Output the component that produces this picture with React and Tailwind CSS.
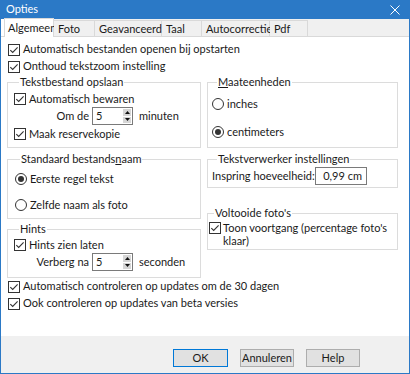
import React from 'react';

function Check({ checked = true }) {
  return (
    <svg width="12" height="12" viewBox="0 0 12 12" className="shrink-0">
      <rect x="0.5" y="0.5" width="11" height="11" fill="#fff" stroke="#333" />
      {checked && <path d="M2.3 6.1 L4.7 8.5 L9.6 3.4" fill="none" stroke="#333" strokeWidth="1.1" />}
    </svg>
  );
}

function Radio({ checked }) {
  return (
    <svg width="12" height="12" viewBox="0 0 12 12" className="shrink-0">
      <circle cx="6" cy="6" r="5.5" fill="#fff" stroke="#333" />
      {checked && <circle cx="6" cy="6" r="3" fill="#333" />}
    </svg>
  );
}

function Spin({ value }) {
  return (
    <div className="flex h-[18px] w-[41px] border border-[#7a7a7a] bg-white">
      <div className="flex-1 pl-[3px] leading-[16px]">{value}</div>
      <div className="flex w-[9px] flex-col gap-[1px] py-[1px] pr-[1px]">
        <div className="flex flex-1 items-center justify-center bg-[#d6d6d6]">
          <svg width="5" height="3" viewBox="0 0 5 3"><path d="M0 3 L2.5 0 L5 3Z" fill="#111" /></svg>
        </div>
        <div className="flex flex-1 items-center justify-center bg-[#d6d6d6]">
          <svg width="5" height="3" viewBox="0 0 5 3"><path d="M0 0 L2.5 3 L5 0Z" fill="#111" /></svg>
        </div>
      </div>
    </div>
  );
}

function Row({ children, className = '' }) {
  return <div className={`flex h-[16px] items-center gap-[3px] whitespace-nowrap ${className}`}>{children}</div>;
}

function Group({ title, className = '', children }) {
  return (
    <fieldset className={`min-w-0 border border-[#dcdcdc] ${className}`}>
      <legend className="ml-[5px] whitespace-nowrap px-[1px] leading-[14px]">{title}</legend>
      {children}
    </fieldset>
  );
}

const tabs = [
  { label: 'Algemeen', w: 'w-[50px]' },
  { label: 'Foto', w: 'w-[41px]' },
  { label: 'Geavanceerd', w: 'w-[67px]' },
  { label: 'Taal', w: 'w-[40px]' },
  { label: 'Autocorrectie', w: 'w-[68px]' },
  { label: 'Pdf', w: 'w-[38px]' },
];

export default function App() {
  return (
    <div
      className="flex h-[374px] w-[410px] flex-col border-x border-b border-[#2b79c6] bg-white text-[11px] text-[#1a1a1a]"
      style={{ fontFamily: 'Lato, "Noto Sans", sans-serif' }}
    >
      {/* title bar */}
      <div className="flex h-[19px] shrink-0 items-center justify-between bg-[#2b79c6] pl-[5px] pr-[9px] text-white">
        <span>Opties</span>
        <svg width="10" height="10" viewBox="0 0 10 10">
          <path d="M0.5 0.5 L9.5 9.5 M9.5 0.5 L0.5 9.5" stroke="#fff" strokeWidth="1" />
        </svg>
      </div>

      {/* tabs */}
      <div className="flex h-[18px] shrink-0 items-end border-b border-[#d9d9d9] bg-[#f0f0f0]">
        <div className="h-full w-[3px] bg-white" />
        {tabs.map((t, i) =>
          i === 0 ? (
            <div key={t.label} className={`${t.w} -mb-[1px] h-[19px] whitespace-nowrap border-x border-t border-[#d9d9d9] bg-white pl-[3px] leading-[17px]`}>
              {t.label}
            </div>
          ) : (
            <div key={t.label} className={`${t.w} h-[16px] whitespace-nowrap border-r border-t border-[#d9d9d9] bg-[#f0f0f0] pl-[4px] leading-[15px]`}>
              {t.label}
            </div>
          )
        )}
      </div>

      {/* panel */}
      <div className="flex-1 px-[6px] pt-[4px]">
        <Row className="h-[17px] pl-[1px]"><Check /><span>Automatisch bestanden openen bij opstarten</span></Row>
        <Row className="h-[17px] pl-[1px]"><Check /><span>Onthoud tekstzoom instelling</span></Row>

        <div className="grid grid-cols-[194px_191px] gap-x-[6px]">
          <div className="flex flex-col">
            <Group title="Tekstbestand opslaan" className="h-[73px] px-[6px]">
              <Row className="mt-[2px]"><Check /><span>Automatisch bewaren</span></Row>
              <div className="flex h-[18px] items-center whitespace-nowrap">
                <span className="w-[78px] pr-[3px] text-right">Om de</span>
                <Spin value="5" />
                <span className="ml-[6px]">minuten</span>
              </div>
              <Row className="mt-[1px]"><Check /><span>Maak reservekopie</span></Row>
            </Group>

            <Group
              title={<span>Standaard bestands<u>n</u>aam</span>}
              className="mt-[4px] h-[67px] px-[7px]"
            >
              <Row className="mt-[5px]"><Radio checked /><span>Eerste regel tekst</span></Row>
              <Row className="mt-[10px]"><Radio /><span>Zelfde naam als foto</span></Row>
            </Group>

            <Group title="Hints" className="mt-[3px] h-[56px] px-[6px]">
              <Row className="mt-[1px]"><Check /><span>Hints zien laten</span></Row>
              <div className="flex h-[18px] items-center whitespace-nowrap">
                <span className="w-[78px] pr-[3px] text-right">Verberg na</span>
                <Spin value="5" />
                <span className="ml-[6px]">seconden</span>
              </div>
            </Group>
          </div>

          <div className="flex flex-col">
            <Group title={<span><u>M</u>aateenheden</span>} className="h-[73px] px-[4px]">
              <Row className="mt-[7px] gap-[1px]"><Radio /><span>inches</span></Row>
              <Row className="mt-[12px] gap-[1px]"><Radio checked /><span>centimeters</span></Row>
            </Group>

            <Group title="Tekstverwerker instellingen" className="mt-[4px] h-[36px] px-[4px]">
              <div className="mt-[1px] flex h-[18px] items-center whitespace-nowrap">
                <span className="w-[103px]">Inspring hoeveelheid:</span>
                <div className="h-[18px] w-[52px] border border-[#7a7a7a] bg-white pr-[4px] text-right leading-[16px]">0,99 cm</div>
              </div>
            </Group>

            <Group title="Voltooide foto's" className="mt-[18px] h-[44px] pl-[1px]">
              <div className="mt-[1px] flex gap-[2px] whitespace-nowrap leading-[13px]">
                <div className="pt-[1px]"><Check /></div>
                <span>Toon voortgang (percentage foto's<br />klaar)</span>
              </div>
            </Group>
          </div>
        </div>

        <Row className="h-[17px] pl-[1px]"><Check /><span>Automatisch controleren op updates om de 30 dagen</span></Row>
        <Row className="h-[17px] pl-[1px]"><Check /><span>Ook controleren op updates van beta versies</span></Row>
      </div>

      {/* footer */}
      <div className="flex h-[37px] shrink-0 items-start gap-[12px] bg-[#f0f0f0] pl-[172px] pt-[13px]">
        <button className="h-[18px] w-[55px] border border-[#0078d7] bg-[#e1e1e1] leading-[16px]">OK</button>
        <button className="h-[18px] w-[54px] border border-[#adadad] bg-[#e1e1e1] leading-[16px]">Annuleren</button>
        <button className="h-[18px] w-[54px] border border-[#adadad] bg-[#e1e1e1] leading-[16px]">Help</button>
      </div>
    </div>
  );
}
